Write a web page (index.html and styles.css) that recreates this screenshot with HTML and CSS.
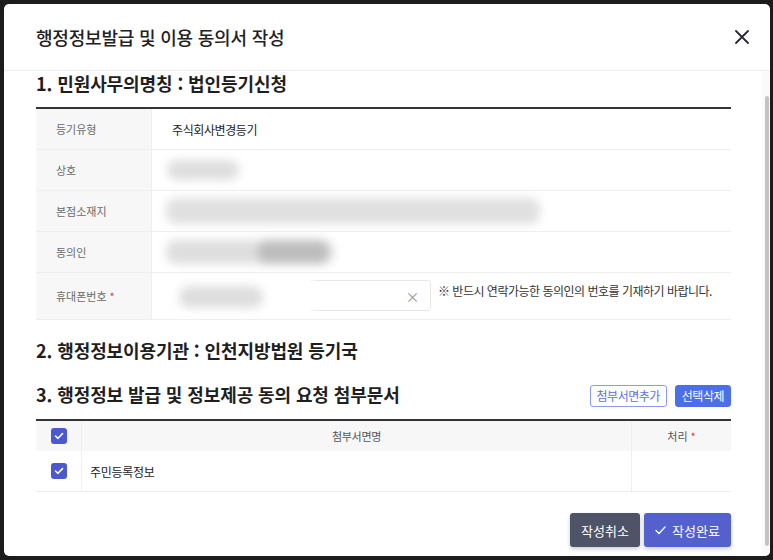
FILE: index.html
```html
<!DOCTYPE html>
<html lang="ko">
<head>
<meta charset="utf-8">
<link rel="stylesheet" href="styles.css">
</head>
<body>
<div class="dialog">
  <div class="dlg-head">
    <h1 class="dlg-title">행정정보발급 및 이용 동의서 작성</h1>
    <button class="close" aria-label="닫기">
      <svg width="14" height="14" viewBox="0 0 14 14"><path d="M1 1L13 13M13 1L1 13" stroke="#2a2a35" stroke-width="1.8" stroke-linecap="round"/></svg>
    </button>
  </div>
  <div class="dlg-body">
    <div class="content">
      <h2 class="sec-title first">1. 민원사무의명칭 : 법인등기신청</h2>
      <div class="info-table">
        <div class="row">
          <div class="label">등기유형</div>
          <div class="value">주식회사변경등기</div>
        </div>
        <div class="row">
          <div class="label">상호</div>
          <div class="value"><span class="blob b-name"></span></div>
        </div>
        <div class="row">
          <div class="label">본점소재지</div>
          <div class="value"><span class="blob b-addr"></span></div>
        </div>
        <div class="row">
          <div class="label">동의인</div>
          <div class="value"><span class="blob b-person"><span class="blob-dark"></span></span></div>
        </div>
        <div class="row row-phone">
          <div class="label">휴대폰번호 <span class="req">*</span></div>
          <div class="value phone-cell">
            <div class="input">
              <div class="mask"><span class="blob b-phone"></span></div>
              <span class="clear">×</span>
            </div>
            <div class="note">※ 반드시 연락가능한 동의인의 번호를 기재하기 바랍니다.</div>
          </div>
        </div>
      </div>

      <h2 class="sec-title sec2">2. 행정정보이용기관 : 인천지방법원 등기국</h2>

      <div class="sec3-head">
        <h2 class="sec-title">3. 행정정보 발급 및 정보제공 동의 요청 첨부문서</h2>
        <div class="actions">
          <button class="btn-outline">첨부서면추가</button>
          <button class="btn-blue">선택삭제</button>
        </div>
      </div>
      <div class="doc-table">
        <div class="drow dhead">
          <div class="c-check"><span class="cb"><svg width="10" height="8" viewBox="0 0 10 8"><path d="M1.5 4L4 6.3L8.5 1.6" fill="none" stroke="#fff" stroke-width="1.6" stroke-linecap="round" stroke-linejoin="round"/></svg></span></div>
          <div class="c-name center">첨부서면명</div>
          <div class="c-proc">처리 <span class="req">*</span></div>
        </div>
        <div class="drow dbody">
          <div class="c-check"><span class="cb"><svg width="10" height="8" viewBox="0 0 10 8"><path d="M1.5 4L4 6.3L8.5 1.6" fill="none" stroke="#fff" stroke-width="1.6" stroke-linecap="round" stroke-linejoin="round"/></svg></span></div>
          <div class="c-name">주민등록정보</div>
          <div class="c-proc"></div>
        </div>
      </div>

      <div class="footer">
        <button class="btn-cancel">작성취소</button>
        <button class="btn-done"><svg width="11" height="9" viewBox="0 0 11 9"><path d="M1 4.5L4 7.5L10 1" fill="none" stroke="#fff" stroke-width="1.3" stroke-linecap="round" stroke-linejoin="round"/></svg>작성완료</button>
      </div>
    </div>
    <div class="scrollbar"><div class="thumb"></div></div>
  </div>
</div>
</body>
</html>
```

FILE: styles.css
```css
* { box-sizing: border-box; }
html, body { margin: 0; padding: 0; }
body {
  background: #1c1c1c;
  width: 773px;
  height: 560px;
  overflow: hidden;
  font-family: "Noto Sans CJK KR", "Noto Sans", sans-serif;
  color: #222;
}
button { font-family: inherit; cursor: pointer; }

.dialog {
  margin: 4px 3px 4px 4px;
  width: 766px;
  height: 552px;
  background: #fff;
  border-radius: 5px;
  overflow: hidden;
  display: flex;
  flex-direction: column;
}
.dlg-head {
  height: 67px;
  flex: none;
  border-bottom: 1px solid #ededed;
  display: flex;
  align-items: center;
  justify-content: space-between;
  padding: 0 21px 0 32px;
}
.dlg-title {
  margin: 0;
  font-size: 18px;
  font-weight: 500;
  letter-spacing: -0.2px;
  color: #222;
}
.close {
  border: 0;
  background: none;
  padding: 0;
  width: 14px;
  height: 14px;
  display: flex;
}

.dlg-body {
  flex: 1;
  display: flex;
  min-height: 0;
}
.content {
  flex: 1;
  padding: 0 31px 0 32px;
}
.scrollbar {
  width: 8px;
  flex: none;
  background: #fafafa;
  padding: 25px 1px 8px 3px;
}
.thumb {
  width: 4px;
  height: 450px;
  background: #c3c3c3;
  border-radius: 2px;
}

.sec-title {
  margin: 0;
  font-size: 18px;
  font-weight: 700;
  line-height: 24px;
  letter-spacing: -0.1px;
  color: #1f1f1f;
}

.info-table {
  margin-top: 12px;
  border-top: 2px solid #333;
}
.row {
  display: flex;
  height: 41px;
  border-bottom: 1px solid #efefef;
}
.row-phone { height: 47px; }
.label {
  width: 116px;
  flex: none;
  background: #f7f7f7;
  border-right: 1px solid #f0f0f0;
  padding-left: 20px;
  display: flex;
  align-items: center;
  font-size: 11px;
  color: #6a6a6a;
}
.req { color: #e23b3b; margin-left: 3px; }
.value {
  flex: 1;
  display: flex;
  align-items: center;
  padding-left: 20px;
  font-size: 12px;
  letter-spacing: -0.4px;
  color: #222;
}

.blob {
  display: block;
  background: #dedede;
  border-radius: 10px;
  filter: blur(5px);
}
.b-name { width: 72px; height: 20px; margin-left: -5px; }
.b-addr { width: 374px; height: 26px; margin-left: -6px; background: #e0e0e0; }
.b-person { width: 168px; height: 24px; margin-left: -6px; display: flex; justify-content: flex-end; padding-right: 6px; }
.blob-dark { display: block; width: 70px; height: 24px; background: #bdbdbd; border-radius: 10px; }
.b-phone { width: 84px; height: 22px; margin-left: 8px; }

.phone-cell { align-items: flex-start; padding-top: 7px; }
.input {
  position: relative;
  width: 259px;
  height: 31px;
  border: 1px solid #e8e8e8;
  border-radius: 3px;
  display: flex;
  align-items: center;
  justify-content: flex-end;
  padding-right: 11px;
}
.mask {
  position: absolute;
  left: -2px;
  top: -2px;
  width: 146px;
  height: 35px;
  background: linear-gradient(to right, #fff 94%, rgba(255,255,255,0));
  display: flex;
  align-items: center;
}
.clear { color: #9a9a9a; font-size: 14px; line-height: 1; }
.note {
  margin-left: 7px;
  padding-top: 2px;
  font-size: 12px;
  color: #333;
  letter-spacing: -0.5px;
}

.sec2 { margin-top: 18px; }
.sec3-head {
  margin-top: 19px;
  display: flex;
  align-items: center;
  justify-content: space-between;
}
.actions { display: flex; gap: 8px; margin-top: 4px; }
.btn-outline, .btn-blue {
  height: 22px;
  border-radius: 3px;
  font-size: 12px;
  padding: 0 6px;
  letter-spacing: -0.5px;
  line-height: 1;
}
.btn-outline {
  border: 1px solid #8a9bf0;
  background: #fff;
  color: #5c72e6;
}
.btn-blue {
  border: 1px solid #4d6ee9;
  background: #4d6ee9;
  color: #fff;
}

.doc-table {
  margin-top: 12px;
  border-top: 2px solid #333;
}
.drow { display: flex; }
.dhead { height: 30px; background: #f7f7f7; }
.dbody { height: 41px; border-bottom: 1px solid #efefef; }
.c-check {
  width: 46px;
  flex: none;
  display: flex;
  align-items: center;
  justify-content: center;
  border-right: 1px solid #efefef;
}
.cb {
  width: 16px;
  height: 16px;
  border-radius: 3px;
  background: #4b59d1;
  display: flex;
  align-items: center;
  justify-content: center;
}
.c-name {
  flex: 1;
  display: flex;
  align-items: center;
  padding-left: 8px;
  font-size: 12px;
  letter-spacing: -0.3px;
  color: #222;
}
.c-name.center { justify-content: center; padding-left: 0; color: #555; font-size: 11px; }
.c-proc {
  width: 100px;
  flex: none;
  border-left: 1px solid #efefef;
  display: flex;
  align-items: center;
  justify-content: center;
  font-size: 11px;
  color: #555;
}

.footer {
  margin-top: 21px;
  display: flex;
  justify-content: flex-end;
  gap: 4px;
}
.btn-cancel, .btn-done {
  height: 34px;
  border: 0;
  border-radius: 3px;
  color: #fff;
  font-size: 13px;
  box-shadow: 0 2px 4px rgba(0,0,0,0.2);
  display: flex;
  align-items: center;
  justify-content: center;
  gap: 6px;
}
.btn-cancel { width: 70px; background: #4e5368; }
.btn-done { width: 87px; background: #5461cc; }
```
